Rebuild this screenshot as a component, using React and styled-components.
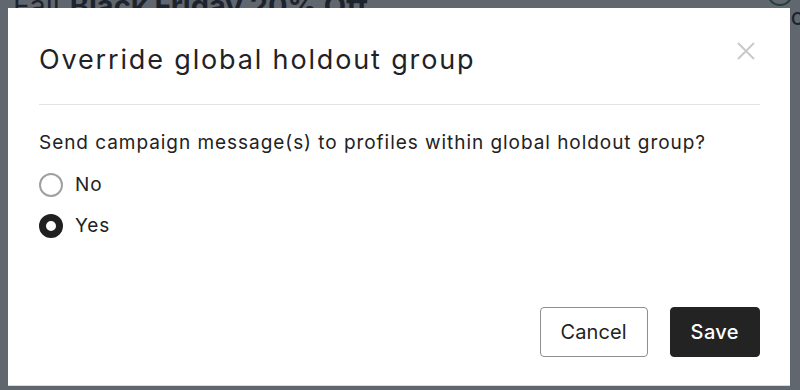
import React, { useState } from "react";
import styled, { createGlobalStyle } from "styled-components";

const Global = createGlobalStyle`
  html, body { margin: 0; padding: 0; }
  body {
    width: 800px;
    height: 390px;
    overflow: hidden;
    font-family: Inter, "Noto Sans", Arial, sans-serif;
    background: #ffffff;
  }
`;

const Page = styled.div`
  position: relative;
  width: 800px;
  height: 390px;
  overflow: hidden;
`;

const BehindHeader = styled.div`
  display: flex;
  align-items: center;
  gap: 10px;
  padding: 0 0 0 13px;
  margin-top: -15px;
  height: 40px;
  font-size: 29px;
  color: #1d2127;
`;

const BehindLight = styled.span`
  font-weight: 400;
`;

const BehindBold = styled.span`
  font-weight: 700;
`;

const BehindCircle = styled.div`
  position: absolute;
  left: 767px;
  top: -20px;
  width: 22px;
  height: 22px;
  border-radius: 50%;
  border: 2px solid #2e7d4f;
`;

const BehindSide = styled.div`
  position: absolute;
  left: 791px;
  top: 9px;
  font-size: 17px;
  font-weight: 600;
  color: #1d2127;
`;

const Overlay = styled.div`
  position: absolute;
  inset: 0;
  background: rgba(30, 38, 50, 0.7);
  display: flex;
  padding: 8px 10px 4px 8px;
  box-sizing: border-box;
`;

const Modal = styled.div`
  position: relative;
  flex: 1;
  background: #ffffff;
  border-bottom: 1px solid #d8dadd;
  display: flex;
  flex-direction: column;
  padding: 0 30px 28px 31px;
  box-sizing: border-box;
`;

const Header = styled.div`
  display: flex;
  align-items: center;
  justify-content: space-between;
  height: 96px;
  border-bottom: 1px solid #e3e3e3;
`;

const Title = styled.h2`
  margin: 0;
  padding-top: 7px;
  font-size: 27px;
  font-weight: 400;
  color: #1f2226;
  letter-spacing: 1.85px;
`;

const CloseButton = styled.button`
  border: 0;
  background: none;
  padding: 0;
  margin-right: 4px;
  margin-top: -10px;
  width: 20px;
  height: 20px;
  display: flex;
  align-items: center;
  justify-content: center;
  cursor: pointer;
`;

const Body = styled.div`
  flex: 1;
  display: flex;
  flex-direction: column;
  padding-top: 26px;
`;

const Question = styled.p`
  margin: 0 0 18px;
  font-size: 19px;
  line-height: 24px;
  letter-spacing: 0.95px;
  color: #222;
`;

const Options = styled.div`
  display: flex;
  flex-direction: column;
  gap: 17px;
`;

const Option = styled.label`
  display: flex;
  align-items: center;
  gap: 12px;
  font-size: 19px;
  line-height: 24px;
  letter-spacing: 0.9px;
  color: #222;
  cursor: pointer;
`;

const Radio = styled.span`
  width: 24px;
  height: 24px;
  border-radius: 50%;
  box-sizing: border-box;
  border: ${(p) => (p.$checked ? "7px solid #202020" : "2px solid #a0a0a0")};
  background: #fff;
`;

const Footer = styled.div`
  display: flex;
  justify-content: flex-end;
  gap: 22px;
`;

const Button = styled.button`
  height: 50px;
  padding: 0 ${(p) => (p.$primary ? "20px" : "19px")};
  min-width: ${(p) => (p.$primary ? "89px" : "108px")};
  border-radius: 4px;
  font-family: Inter, "Noto Sans", Arial, sans-serif;
  font-size: 20px;
  font-weight: ${(p) => (p.$primary ? 500 : 400)};
  letter-spacing: ${(p) => (p.$primary ? "0.4px" : "0.1px")};
  color: ${(p) => (p.$primary ? "#ffffff" : "#222222")};
  background: ${(p) => (p.$primary ? "#232323" : "#ffffff")};
  border: 1px solid ${(p) => (p.$primary ? "#232323" : "#8f8f8f")};
  cursor: pointer;
`;

export default function App() {
  const [value, setValue] = useState("yes");
  return (
    <>
      <Global />
      <Page>
        <BehindHeader>
          <BehindLight>Fall</BehindLight>
          <BehindBold>Black Friday 20% Off</BehindBold>
        </BehindHeader>
        <BehindCircle />
        <BehindSide>Cl</BehindSide>
        <Overlay>
          <Modal>
            <Header>
              <Title>Override global holdout group</Title>
              <CloseButton aria-label="Close">
                <svg width="18" height="18" viewBox="0 0 18 18">
                  <path d="M1 1 L17 17 M17 1 L1 17" stroke="#c8c8c8" strokeWidth="1.8" />
                </svg>
              </CloseButton>
            </Header>
            <Body>
              <Question>
                Send campaign message(s) to profiles within global holdout group?
              </Question>
              <Options>
                <Option onClick={() => setValue("no")}>
                  <Radio $checked={value === "no"} />
                  No
                </Option>
                <Option onClick={() => setValue("yes")}>
                  <Radio $checked={value === "yes"} />
                  Yes
                </Option>
              </Options>
            </Body>
            <Footer>
              <Button>Cancel</Button>
              <Button $primary>Save</Button>
            </Footer>
          </Modal>
        </Overlay>
      </Page>
    </>
  );
}
